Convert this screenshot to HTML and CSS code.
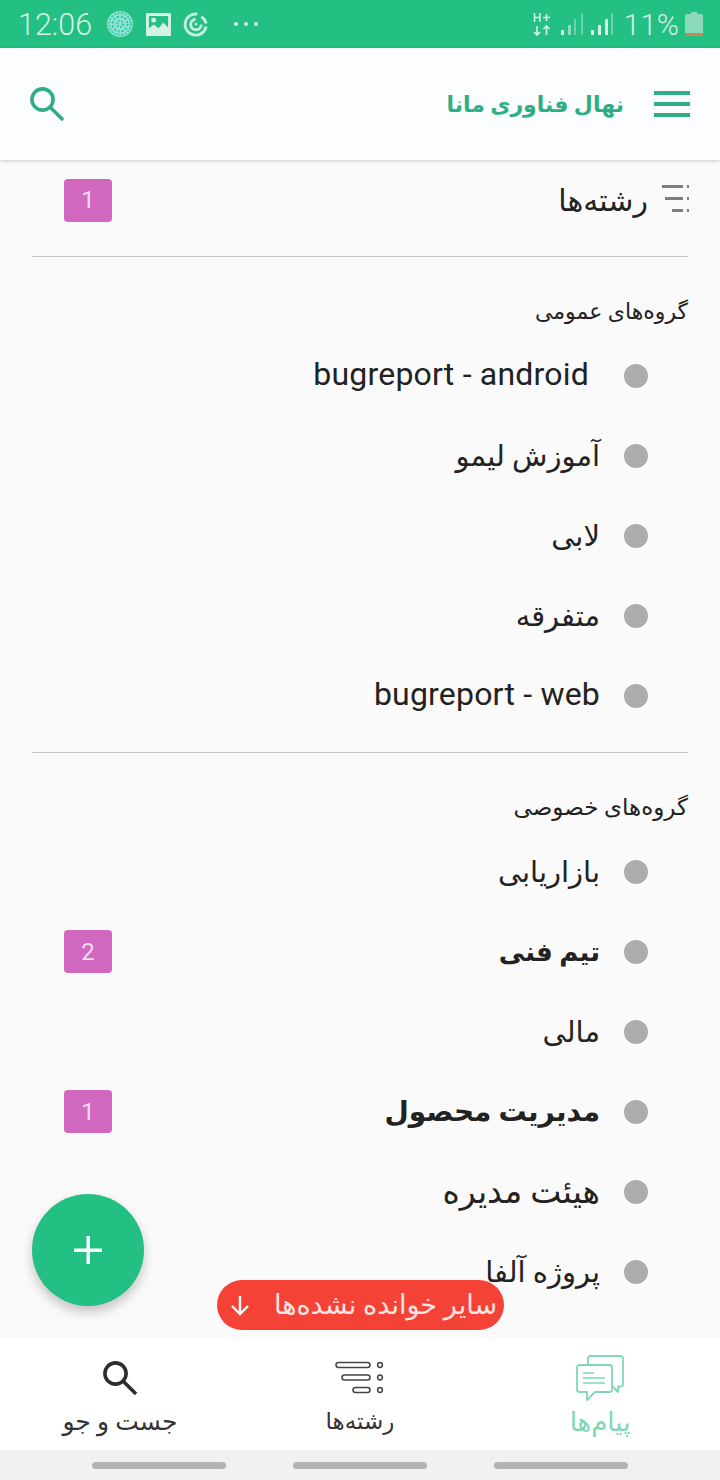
FILE: index.html
```html
<!DOCTYPE html>
<html lang="fa" dir="rtl">
<head>
  <meta charset="UTF-8">
  <meta name="viewport" content="width=device-width, initial-scale=1.0">
  <title>نهال فناوری مانا</title>
  <link rel="stylesheet" href="styles.css">
</head>
<body>
  <div class="phone">
    <div class="status-bar" dir="ltr">
      <div class="status-left">
        <span class="clock">12:06</span>
        <svg class="st-icon" width="28" height="28" viewBox="0 0 28 28" fill="none">
          <circle cx="14" cy="14" r="13" fill="#8fe3cd"/>
          <circle cx="14" cy="14" r="11" fill="none" stroke="#27c6ae" stroke-width="1.5" stroke-dasharray="2 1.5"/>
          <circle cx="14" cy="14" r="7.5" fill="none" stroke="#27c6ae" stroke-width="2" stroke-dasharray="2 2"/>
          <circle cx="14" cy="14" r="3" fill="none" stroke="#27c6ae" stroke-width="2" stroke-dasharray="1.5 1.5"/>
        </svg>
        <svg class="st-icon" width="25" height="23" viewBox="0 0 26 24">
          <path fill="#d5f2e6" fill-rule="evenodd" d="M1 0h24a1 1 0 0 1 1 1v22a1 1 0 0 1-1 1H1a1 1 0 0 1-1-1V1a1 1 0 0 1 1-1zM3 3v13l5-4 5 4 5-6 5 5V3z"/>
          <circle cx="8" cy="7.5" r="2.6" fill="#d5f2e6"/>
        </svg>
        <svg class="st-icon" width="25" height="25" viewBox="0 0 26 26" fill="none" stroke="#c4eedd" stroke-width="3">
          <path d="M15 2.2A11 11 0 1 0 24 15"/>
          <path d="M19 5a10 10 0 0 1 5 7"/>
          <path d="M13 7.5a5.5 5.5 0 1 0 6 5.5"/>
          <circle cx="13.5" cy="12.5" r="1.6" fill="#c4eedd" stroke="none"/>
        </svg>
        <span class="st-dots"><i></i><i></i><i></i></span>
      </div>
      <div class="status-right">
        <svg class="st-icon st-net" width="18" height="24" viewBox="0 0 18 24" fill="none" stroke="#d5f2e6" stroke-width="1.6">
          <path d="M1.5 1v9M7 1v9M1.5 5.5H7M10 5.5h7M13.5 2v7"/>
          <path d="M4 14v9M1 20l3 3 3-3M13.5 23v-9M10.5 17l3-3 3 3"/>
        </svg>
        <svg class="st-icon sig" width="24" height="24" viewBox="0 0 24 24">
          <rect x="1" y="18" width="3" height="5" fill="#d5f2e6"/>
          <rect x="8" y="13" width="3" height="10" fill="#8ddcbc"/>
          <rect x="14" y="7" width="2" height="16" fill="#6ed2aa"/>
          <rect x="21" y="1" width="2" height="22" fill="#6ed2aa"/>
        </svg>
        <svg class="st-icon sig" width="24" height="24" viewBox="0 0 24 24">
          <rect x="1" y="18" width="3" height="5" fill="#d5f2e6"/>
          <rect x="8" y="13" width="3" height="10" fill="#d5f2e6"/>
          <rect x="15" y="7" width="3" height="16" fill="#d5f2e6"/>
          <rect x="21" y="1" width="2" height="22" fill="#6ed2aa"/>
        </svg>
        <span class="battery-pct">11%</span>
        <svg class="battery" width="18" height="24" viewBox="0 0 18 24">
          <path fill="#8cd9bb" d="M6 0h6v2h4a2 2 0 0 1 2 2v17H0V4a2 2 0 0 1 2-2h4z"/>
          <path fill="#d6805a" d="M0 21h18v1a2 2 0 0 1-2 2H2a2 2 0 0 1-2-2z"/>
        </svg>
      </div>
    </div>

    <header class="app-bar">
      <div class="app-title">
        <span class="burger"><i></i><i></i><i></i></span>
        <span class="title-text">نهال فناوری مانا</span>
      </div>
      <svg class="app-search" width="40" height="40" viewBox="0 0 40 40" fill="none" stroke="#2fae84" stroke-width="3.6">
        <circle cx="15.5" cy="15.5" r="10.6"/>
        <path d="M23.5 23.5 36 36"/>
      </svg>
    </header>

    <main class="content">
      <div class="threads-row">
        <svg class="threads-icon" width="32" height="32" viewBox="0 0 32 32" fill="#7d7d7d">
          <rect x="2" y="1" width="21" height="3"/><rect x="27" y="1" width="2" height="3"/>
          <rect x="5" y="13" width="18" height="3"/><rect x="27" y="13" width="2" height="3"/>
          <rect x="12" y="25" width="11" height="3"/><rect x="27" y="25" width="2" height="3"/>
        </svg>
        <span class="threads-name">رشته‌ها</span>
        <span class="badge">1</span>
      </div>
      <hr class="divider">

      <h2 class="group-label">گروه‌های عمومی</h2>
      <ul class="stream-list">
        <li class="stream"><span class="dot"></span><span class="name name-latin name-shift" dir="ltr">bugreport - android</span></li>
        <li class="stream"><span class="dot"></span><span class="name">آموزش لیمو</span></li>
        <li class="stream"><span class="dot"></span><span class="name">لابی</span></li>
        <li class="stream"><span class="dot"></span><span class="name">متفرقه</span></li>
        <li class="stream"><span class="dot"></span><span class="name name-latin" dir="ltr">bugreport - web</span></li>
      </ul>
      <hr class="divider">

      <h2 class="group-label group-label-private">گروه‌های خصوصی</h2>
      <ul class="stream-list">
        <li class="stream"><span class="dot"></span><span class="name">بازاریابی</span></li>
        <li class="stream"><span class="dot"></span><span class="name unread unread-short">تیم فنی</span><span class="badge">2</span></li>
        <li class="stream"><span class="dot"></span><span class="name">مالی</span></li>
        <li class="stream"><span class="dot"></span><span class="name unread">مدیریت محصول</span><span class="badge">1</span></li>
        <li class="stream"><span class="dot"></span><span class="name name-large">هیئت مدیره</span></li>
        <li class="stream"><span class="dot"></span><span class="name">پروژه آلفا</span></li>
      </ul>
    </main>

    <button class="fab">
      <svg width="32" height="32" viewBox="0 0 32 32" fill="#fff"><rect x="14.5" y="2" width="3.4" height="28"/><rect x="2" y="14.5" width="28" height="3.4"/></svg>
    </button>

    <div class="unread-pill">
      <span>سایر خوانده نشده‌ها</span>
      <svg width="24" height="24" viewBox="0 0 24 24" fill="none" stroke="#fff" stroke-width="2.4"><path d="M12 3v18M4 13l8 8 8-8"/></svg>
    </div>

    <nav class="bottom-nav">
      <div class="tab tab-active">
        <span class="tab-icon">
          <svg width="49" height="46" viewBox="0 0 49 46" fill="none" stroke="#7ed8b8" stroke-width="1.8" stroke-linejoin="round">
            <path d="M12 9V3.5A2.5 2.5 0 0 1 14.500 1h30A2.500 2.500 0 0 1 47 3.500V29a2.500 2.500 0 0 1-2.500 2.500H42V37l-6-6"/>
            <path d="M3.500 10h30A2.500 2.500 0 0 1 36 12.500V34.500A2.500 2.500 0 0 1 33.500 37H19l-8 8v-8H3.500A2.500 2.500 0 0 1 1 34.500v-22A2.500 2.500 0 0 1 3.500 10z"/>
            <path d="M7 18h11M7 23h22M7 28h22" stroke-width="1.6"/>
          </svg>
        </span>
        <span class="tab-label">پیام‌ها</span>
      </div>
      <div class="tab">
        <span class="tab-icon">
          <svg width="52" height="40" viewBox="0 0 52 40" fill="none" stroke="#444" stroke-width="1.5">
            <rect x="2" y="4.500" width="34" height="5" rx="2.500"/>
            <rect x="8" y="17" width="28" height="5" rx="2.500"/>
            <rect x="19" y="29.500" width="17" height="5" rx="2.500"/>
            <circle cx="46" cy="7" r="2.400"/><circle cx="46" cy="19.500" r="2.400"/><circle cx="46" cy="32" r="2.400"/>
          </svg>
        </span>
        <span class="tab-label">رشته‌ها</span>
      </div>
      <div class="tab">
        <span class="tab-icon">
          <svg width="40" height="40" viewBox="0 0 40 40" fill="none" stroke="#2d2d2d" stroke-width="3.6">
            <circle cx="15.500" cy="15.500" r="10.600"/>
            <path d="M23.500 23.500 36 36"/>
          </svg>
        </span>
        <span class="tab-label tab-label-wide">جست و جو</span>
      </div>
    </nav>

    <div class="system-nav">
      <i></i><i></i><i></i>
    </div>
  </div>
</body>
</html>
```

FILE: styles.css
```css
* {
  box-sizing: border-box;
}

html, body {
  margin: 0;
  padding: 0;
}

body {
  font-family: Roboto, "DejaVu Sans", sans-serif;
  color: #222;
  background: #fafafa;
}

.phone {
  position: relative;
  width: 720px;
  height: 1480px;
  display: flex;
  flex-direction: column;
  overflow: hidden;
}

/* status bar */
.status-bar {
  height: 48px;
  flex: none;
  background: #24bf83;
  display: flex;
  justify-content: space-between;
  align-items: center;
  padding: 0 17px 0 18px;
}

.status-left,
.status-right {
  display: flex;
  align-items: center;
}

.clock {
  font-size: 30.5px;
  font-weight: 300;
  color: #d5f2e6;
  margin-right: 14px;
}

.st-icon {
  display: block;
  margin-right: 12px;
}

.st-dots {
  display: flex;
  gap: 6px;
  margin-left: 14px;
}

.st-dots i {
  width: 4px;
  height: 4px;
  border-radius: 50%;
  background: #d5f2e6;
}

.st-net {
  margin-right: 9px;
}

.sig {
  margin-right: 6px;
}

.battery-pct {
  font-size: 30px;
  font-weight: 300;
  color: #d5f2e6;
  margin-left: 4px;
  margin-right: 6px;
}

.battery {
  display: block;
}

/* app bar */
.app-bar {
  height: 112px;
  flex: none;
  background: #fbfdff;
  box-shadow: 0 1px 4px rgba(0, 0, 0, 0.2);
  display: flex;
  justify-content: space-between;
  align-items: center;
  padding: 0 30px 0 27px;
  position: relative;
  z-index: 1;
}

.app-title {
  display: flex;
  align-items: center;
  gap: 30px;
}

.burger {
  display: flex;
  flex-direction: column;
  gap: 7px;
  width: 36px;
}

.burger i {
  height: 4px;
  background: #2fae84;
}

.title-text {
  font-size: 22px;
  font-weight: bold;
  color: #2fae84;
}

/* list area */
.content {
  flex: 1;
  min-height: 0;
  overflow: hidden;
  background: #fafafa;
  padding: 0 32px;
}

.threads-row {
  height: 96px;
  display: flex;
  align-items: center;
  padding-bottom: 16px;
  margin-right: -4px;
}

.threads-icon {
  flex: none;
}

.threads-name {
  font-size: 30px;
  margin-right: 12px;
}

.badge {
  width: 48px;
  height: 43px;
  margin-right: auto;
  margin-left: 32px;
  background: #d267bf;
  color: #f4dcf0;
  border-radius: 4px;
  font-size: 24px;
  display: flex;
  align-items: center;
  justify-content: center;
}

.stream .badge {
  margin-top: -1px;
}

.divider {
  margin: 0;
  border: none;
  border-top: 1px solid #c6c6c6;
}

.group-label {
  margin: 0;
  height: 79px;
  padding-top: 40px;
  font-size: 22px;
  line-height: 30px;
  font-weight: normal;
  color: #222;
}

.group-label-private {
  font-size: 23px;
}

.stream-list {
  list-style: none;
  margin: 0 0 16px;
  padding: 0 40px 0 0;
}

.stream {
  height: 80px;
  display: flex;
  align-items: center;
}

.dot {
  flex: none;
  width: 24px;
  height: 24px;
  border-radius: 50%;
  background: #adadad;
  margin-left: 24px;
}

.name {
  font-size: 29px;
  line-height: 44px;
  white-space: nowrap;
}

.name-large {
  font-size: 33px;
}

.name-latin {
  font-size: 32px;
  letter-spacing: 0.2px;
  padding-bottom: 4px;
}

.name-shift {
  margin-right: 11px;
}

.unread {
  font-size: 28px;
  font-weight: bold;
}

.unread-short {
  font-size: 26px;
}

/* floating stuff */
.fab {
  position: absolute;
  left: 32px;
  top: 1194px;
  width: 112px;
  height: 112px;
  border: none;
  border-radius: 50%;
  background: #24bf83;
  box-shadow: 0 6px 12px rgba(0, 0, 0, 0.22);
  display: flex;
  align-items: center;
  justify-content: center;
  padding: 0;
}

.unread-pill {
  position: absolute;
  left: 217px;
  top: 1280px;
  width: 287px;
  height: 50px;
  border-radius: 25px;
  background: #f44336;
  color: #fbe4e2;
  font-size: 27px;
  display: flex;
  align-items: center;
  justify-content: space-between;
  padding: 0 7px 0 11px;
}

/* bottom tabs */
.bottom-nav {
  height: 112px;
  flex: none;
  background: #fff;
  display: flex;
  position: relative;
}

.tab {
  flex: 1;
  display: flex;
  flex-direction: column;
  align-items: center;
  padding-top: 17px;
  gap: 6px;
}

.tab-icon {
  height: 46px;
  display: flex;
  align-items: center;
}

.tab-label {
  font-size: 23px;
  line-height: 30px;
  color: #333;
}

.tab-label-wide {
  font-size: 25px;
}

.tab-active .tab-label {
  font-size: 26px;
  color: #7ed8b8;
}

.system-nav {
  height: 30px;
  flex: none;
  background: #f1f1f1;
  display: flex;
  justify-content: center;
  align-items: center;
  gap: 67px;
}

.system-nav i {
  width: 134px;
  height: 7px;
  border-radius: 4px;
  background: #b3b3b3;
}
```
